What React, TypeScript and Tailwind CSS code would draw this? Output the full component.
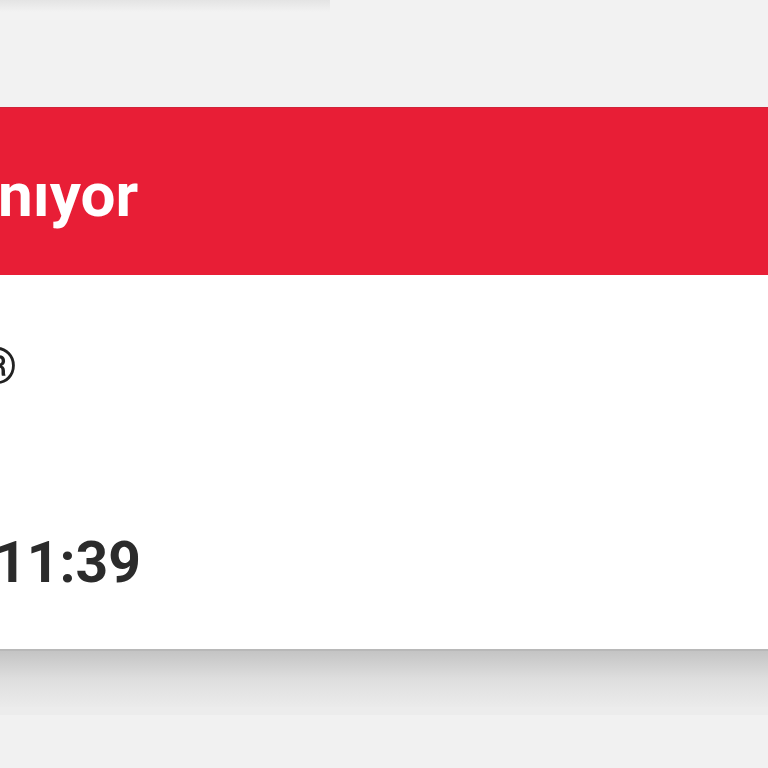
export default function App() {
  return (
    <div className="w-[768px] h-[768px] overflow-hidden bg-[#f2f2f2] flex flex-col" style={{ fontFamily: "Roboto, 'Noto Sans', sans-serif" }}>
      <div className="h-[12px] w-[330px] bg-gradient-to-b from-[#e4e4e4] to-[#f2f2f2] shrink-0" />
      <div className="h-[95px] shrink-0" />
      <div className="h-[168px] shrink-0 bg-[#e81e36] border-t border-[#d0243a] flex items-center overflow-hidden">
        <span className="text-white font-bold text-[62px] leading-none ml-[-2px] mt-[6px] whitespace-nowrap">nıyor</span>
      </div>
      <div className="h-[374px] shrink-0 bg-white flex flex-col overflow-hidden">
        <div className="h-[66px] shrink-0" />
        <div className="flex items-center h-[50px] overflow-hidden">
          <span className="text-[#222] text-[50px] leading-none ml-[-22px]">®</span>
        </div>
        <div className="h-[141px] shrink-0" />
        <div className="flex items-center h-[60px] overflow-hidden">
          <span className="text-[#2b2b2b] font-bold text-[57px] leading-none ml-[-6px] whitespace-nowrap">11:39</span>
        </div>
      </div>
      <div className="h-[2px] shrink-0 bg-[#b8b8b8]" />
      <div className="h-[56px] shrink-0 bg-gradient-to-b from-[#c4c4c4] via-[#dedede] to-[#ebebeb]" />
      <div className="h-[8px] shrink-0 bg-[#ececec]" />
      <div className="flex-1 bg-[#f1f1f1]" />
    </div>
  );
}
